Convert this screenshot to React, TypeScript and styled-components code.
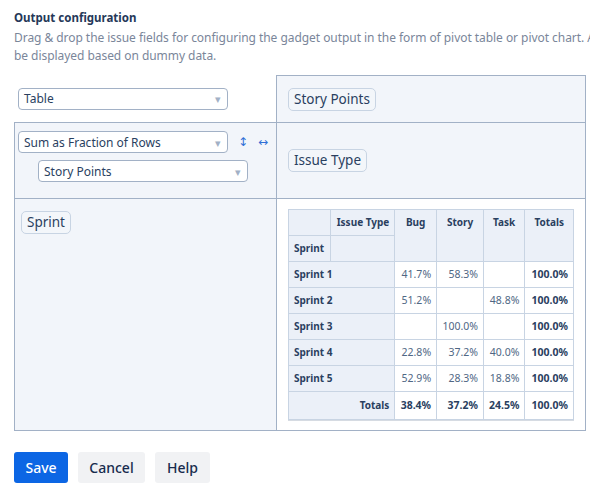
import React from "react";
import styled, { createGlobalStyle } from "styled-components";

const GlobalStyle = createGlobalStyle`
  html, body {
    margin: 0;
    padding: 0;
    background: #ffffff;
    overflow: hidden;
  }
  body {
    font-family: "Noto Sans", "Open Sans", sans-serif;
    color: #172b4d;
  }
`;

const Page = styled.div`
  padding: 10px 0 0 14px;
  width: 700px;
`;

const Title = styled.h2`
  margin: 0;
  font-size: 11.5px;
  font-weight: 700;
  line-height: 16px;
  color: #253858;
`;

const Description = styled.p`
  margin: 3px 0 0;
  font-size: 12px;
  line-height: 18px;
  letter-spacing: -0.05px;
  color: #7a869a;
  white-space: nowrap;
`;

const PivotUi = styled.div`
  margin-top: 10px;
  display: grid;
  grid-template-columns: 262px 310px;
  grid-template-rows: 48px 76px 232px;
`;

type Sides = { $t?: boolean; $r?: boolean; $b?: boolean; $l?: boolean };

const Cell = styled.div<Sides & { $light?: boolean; $center?: boolean }>`
  box-sizing: border-box;
  background: ${(p) => (p.$light ? "#f2f5fa" : "#ffffff")};
  border-style: solid;
  border-color: #a2b1c6;
  border-width: ${(p) =>
    `${p.$t ? 1 : 0}px ${p.$r ? 1 : 0}px ${p.$b ? 1 : 0}px ${p.$l ? 1 : 0}px`};
  display: flex;
  flex-direction: column;
  justify-content: ${(p) => (p.$center ? "center" : "flex-start")};
`;

const RendererCell = styled(Cell)`
  padding: 0 0 0 4px;
`;

const AxisCell = styled(Cell)`
  padding: 0 11px;
  align-items: flex-start;
`;

const RowsCell = styled(Cell)`
  padding: 12px 6px;
  align-items: flex-start;
`;

const AggCell = styled(Cell)`
  padding: 8px 0 0 3px;
  gap: 7px;
`;

const OutputCell = styled(Cell)`
  padding: 10px 11px;
  align-items: flex-start;
`;

const DropdownBox = styled.div<{ $indent?: number }>`
  box-sizing: border-box;
  width: 210px;
  height: 22px;
  margin-left: ${(p) => p.$indent ?? 0}px;
  padding: 0 6px 0 5px;
  background: #ffffff;
  border: 1px solid #a2b1c6;
  border-radius: 4px;
  display: flex;
  align-items: center;
  justify-content: space-between;
  font-size: 12px;
  color: #2a3f5f;
`;

const DropdownIcon = styled.span`
  font-size: 11px;
  color: #a2b1c6;
`;

const AggRow = styled.div`
  display: flex;
  align-items: center;
`;

const OrderButton = styled.span`
  width: 20px;
  text-align: center;
  font-family: "DejaVu Sans", sans-serif;
  font-size: 12px;
  color: #2f6fd6;
  &:first-of-type {
    margin-left: 5px;
  }
`;

const Attr = styled.span`
  display: inline-block;
  padding: 1px 5px;
  font-size: 13.5px;
  line-height: 19px;
  color: #2a3f5f;
  background: #f3f6fa;
  border: 1px solid #c8d4e3;
  border-radius: 5px;
`;

const PivotTable = styled.table`
  border-collapse: collapse;
  font-size: 10px;
  color: #2a3f5f;
  box-shadow: 0 1px 0 #d6dbe2;
`;

const Th = styled.th<{ $align?: string; $w?: number; $mid?: boolean; $tall?: boolean }>`
  background: #ebf0f8;
  border: 1px solid #c8d4e3;
  font-weight: 700;
  padding: ${(p) => (p.$tall ? "7px 5px" : "6px 5px")};
  line-height: 13px;
  vertical-align: ${(p) => (p.$mid ? "middle" : "top")};
  text-align: ${(p) => p.$align ?? "left"};
  width: ${(p) => (p.$w ? `${p.$w - 11}px` : "auto")};
  white-space: nowrap;
`;

const Td = styled.td<{ $total?: boolean }>`
  border: 1px solid #c8d4e3;
  background: #ffffff;
  padding: 6px 5px;
  line-height: 13px;
  text-align: right;
  vertical-align: middle;
  color: ${(p) => (p.$total ? "#2a3f5f" : "#506784")};
  font-weight: ${(p) => (p.$total ? 700 : 400)};
  font-size: 10.5px;
  white-space: nowrap;
`;

const Buttons = styled.div`
  margin-top: 21px;
  display: flex;
  gap: 10px;
`;

const Button = styled.button<{ $primary?: boolean; $w: number }>`
  height: 31px;
  width: ${(p) => p.$w}px;
  border: none;
  border-radius: 3px;
  font-family: "Noto Sans", sans-serif;
  font-size: 14px;
  font-weight: 500;
  padding: 0;
  background: ${(p) => (p.$primary ? "#0c66e4" : "#f1f2f4")};
  color: ${(p) => (p.$primary ? "#ffffff" : "#172b4d")};
`;

const rows = [
  { name: "Sprint 1", bug: "41.7%", story: "58.3%", task: "" },
  { name: "Sprint 2", bug: "51.2%", story: "", task: "48.8%" },
  { name: "Sprint 3", bug: "", story: "100.0%", task: "" },
  { name: "Sprint 4", bug: "22.8%", story: "37.2%", task: "40.0%" },
  { name: "Sprint 5", bug: "52.9%", story: "28.3%", task: "18.8%" },
];

export default function App() {
  return (
    <>
      <GlobalStyle />
      <Page>
        <Title>Output configuration</Title>
        <Description>
          Drag &amp; drop the issue fields for configuring the gadget output in the form of pivot
          table or pivot chart. A preview will
          <br />
          be displayed based on dummy data.
        </Description>
        <PivotUi>
          <RendererCell $b $center>
            <DropdownBox>
              Table<DropdownIcon>▾</DropdownIcon>
            </DropdownBox>
          </RendererCell>
          <AxisCell $light $t $l $r $b $center>
            <Attr>Story Points</Attr>
          </AxisCell>
          <AggCell $light $l $b>
            <AggRow>
              <DropdownBox>
                Sum as Fraction of Rows<DropdownIcon>▾</DropdownIcon>
              </DropdownBox>
              <OrderButton>↕</OrderButton>
              <OrderButton>↔</OrderButton>
            </AggRow>
            <DropdownBox $indent={20}>
              Story Points<DropdownIcon>▾</DropdownIcon>
            </DropdownBox>
          </AggCell>
          <AxisCell $light $l $r $b $center>
            <Attr>Issue Type</Attr>
          </AxisCell>
          <RowsCell $light $l $b>
            <Attr>Sprint</Attr>
          </RowsCell>
          <OutputCell $l $r $b>
            <PivotTable>
              <thead>
                <tr>
                  <Th $w={43}></Th>
                  <Th $w={64} $align="right">Issue Type</Th>
                  <Th $w={42} $align="center" rowSpan={2}>Bug</Th>
                  <Th $w={47} $align="center" rowSpan={2}>Story</Th>
                  <Th $w={40} $align="center" rowSpan={2}>Task</Th>
                  <Th $w={49} $align="center" rowSpan={2}>Totals</Th>
                </tr>
                <tr>
                  <Th>Sprint</Th>
                  <Th></Th>
                </tr>
              </thead>
              <tbody>
                {rows.map((r) => (
                  <tr key={r.name}>
                    <Th colSpan={2} $mid>{r.name}</Th>
                    <Td>{r.bug}</Td>
                    <Td>{r.story}</Td>
                    <Td>{r.task}</Td>
                    <Td $total>100.0%</Td>
                  </tr>
                ))}
                <tr>
                  <Th colSpan={2} $align="right" $mid $tall>Totals</Th>
                  <Td $total>38.4%</Td>
                  <Td $total>37.2%</Td>
                  <Td $total>24.5%</Td>
                  <Td $total>100.0%</Td>
                </tr>
              </tbody>
            </PivotTable>
          </OutputCell>
        </PivotUi>
        <Buttons>
          <Button $primary $w={54}>Save</Button>
          <Button $w={67}>Cancel</Button>
          <Button $w={55}>Help</Button>
        </Buttons>
      </Page>
    </>
  );
}
